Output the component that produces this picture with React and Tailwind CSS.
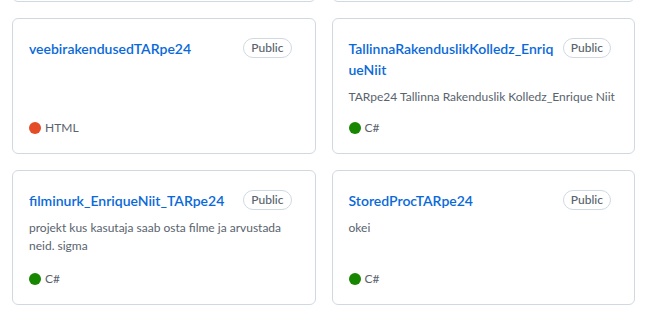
const repos = [
  {
    name: "veebirakendusedTARpe24",
    desc: "",
    lang: "HTML",
    color: "bg-[#e34c26]",
  },
  {
    name: "TallinnaRakenduslikKolledz_EnriqueNiit",
    desc: "TARpe24 Tallinna Rakenduslik Kolledz_Enrique Niit",
    lang: "C#",
    color: "bg-[#178600]",
  },
  {
    name: "filminurk_EnriqueNiit_TARpe24",
    desc: "projekt kus kasutaja saab osta filme ja arvustada neid. sigma",
    lang: "C#",
    color: "bg-[#178600]",
  },
  { name: "StoredProcTARpe24", desc: "okei", lang: "C#", color: "bg-[#178600]" },
];

const PinnedCard = ({ repo }) => {
  return (
    <div className="flex flex-col border border-[#d1d9e0] rounded-md bg-white px-4 pt-[19px] pb-4 min-w-0">
      <div className="flex items-start">
        <a href="#" className="flex-auto min-w-0 break-all text-[14px] leading-[21px] font-semibold text-[#0969da]">
          {repo.name}
        </a>
        <span className="ml-1 mr-[7px] mt-[0px] shrink-0 rounded-full border border-[#d1d9e0] px-[7px] text-[12px] leading-[18px] font-medium text-[#59636e]">
          Public
        </span>
      </div>
      {repo.desc && (
        <p className="mt-2 text-[12px] leading-[18px] text-[#59636e]">{repo.desc}</p>
      )}
      <p className="mt-auto flex items-center text-[12px] leading-[18px] text-[#59636e]">
        <span className={`inline-block w-3 h-3 rounded-full mr-1 ${repo.color}`}></span>
        <span>{repo.lang}</span>
      </p>
    </div>
  );
};

export default function App() {
  return (
    <div className="h-[323px] w-[653px] overflow-hidden bg-white font-['Lato',sans-serif]">
      <div className="ml-3 mt-[-134px] grid w-[623px] grid-cols-2 grid-rows-[136px_136px_135px] gap-4">
        {/* previous row, scrolled mostly out of view */}
        <div className="border border-[#d1d9e0] rounded-md"></div>
        <div className="border border-[#d1d9e0] rounded-md"></div>
        {repos.map((repo) => (
          <PinnedCard key={repo.name} repo={repo} />
        ))}
      </div>
    </div>
  );
}
